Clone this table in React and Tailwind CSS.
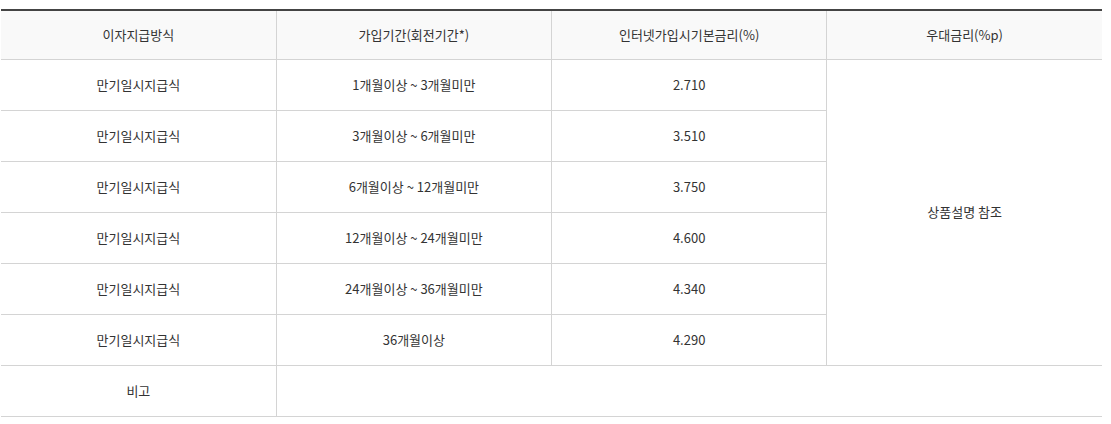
const rows = [
  ["만기일시지급식", "1개월이상 ~ 3개월미만", "2.710"],
  ["만기일시지급식", "3개월이상 ~ 6개월미만", "3.510"],
  ["만기일시지급식", "6개월이상 ~ 12개월미만", "3.750"],
  ["만기일시지급식", "12개월이상 ~ 24개월미만", "4.600"],
  ["만기일시지급식", "24개월이상 ~ 36개월미만", "4.340"],
  ["만기일시지급식", "36개월이상", "4.290"],
];

export default function App() {
  const cell = "h-[51px] border-b border-[#d4d4d4] text-center align-middle";
  const head = "h-[49px] border-b border-[#d4d4d4] text-center align-middle font-normal";
  return (
    <div className="bg-white min-h-screen pt-[9px] pl-[1px]" style={{ fontFamily: '"Noto Sans CJK KR", "Noto Sans", sans-serif' }}>
      <table className="w-[1101px] table-fixed border-collapse border-t-2 border-t-[#444] text-[13px] text-[#333]">
        <thead>
          <tr className="bg-[#f9f9f9]">
            <th className={`${head} border-r`}>이자지급방식</th>
            <th className={`${head} border-r`}>가입기간(회전기간*)</th>
            <th className={`${head} border-r`}>인터넷가입시기본금리(%)</th>
            <th className={head}>우대금리(%p)</th>
          </tr>
        </thead>
        <tbody>
          {rows.map((r, i) => (
            <tr key={i}>
              <td className={`${cell} border-r`}>{r[0]}</td>
              <td className={`${cell} border-r`}>{r[1]}</td>
              <td className={`${cell} border-r`}>{r[2]}</td>
              {i === 0 && (
                <td rowSpan={6} className={cell}>
                  상품설명 참조
                </td>
              )}
            </tr>
          ))}
          <tr>
            <td className={`${cell} border-r`}>비고</td>
            <td colSpan={3} className={cell}></td>
          </tr>
        </tbody>
      </table>
    </div>
  );
}
